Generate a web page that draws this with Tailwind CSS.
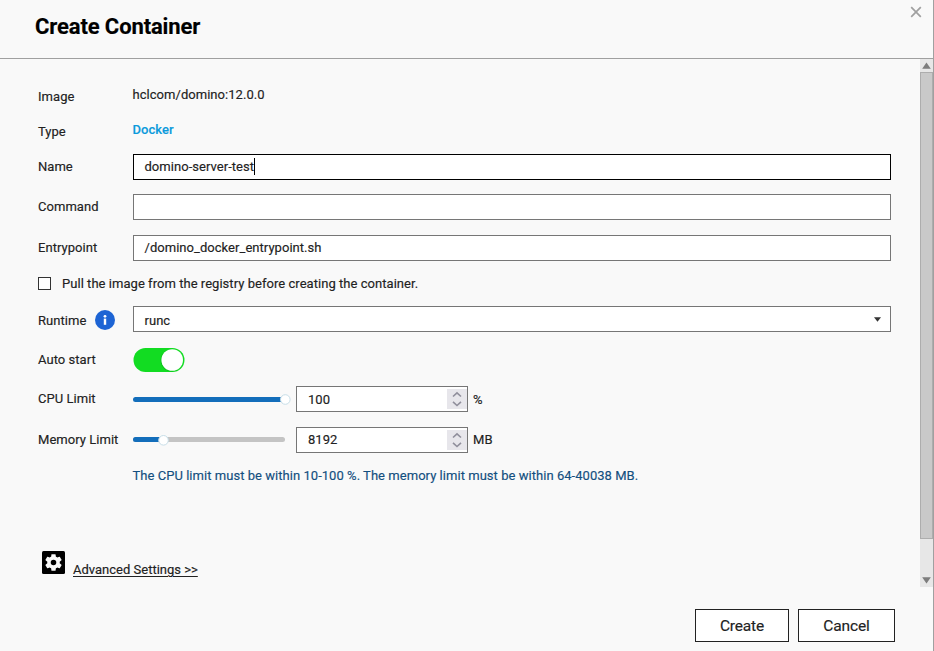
<!DOCTYPE html>
<html lang="en">
<head>
<meta charset="utf-8">
<title>Create Container</title>
<script src="https://cdn.jsdelivr.net/npm/@tailwindcss/browser@4"></script>
</head>
<body class="w-[934px] h-[651px] overflow-hidden bg-[#f9f9f9] text-[#222] font-[Roboto,sans-serif] text-[13px] leading-[18px] tracking-[0.04px] [-webkit-text-stroke:0.15px]">
<div class="flex flex-col w-full h-full border-r border-[#a0a0a0]">
  <header class="flex justify-between h-[59px] shrink-0 border-b border-[#a0a0a0] pl-[35px] pr-[11px]">
    <h1 class="pt-[13px] text-[22px] leading-[28px] font-bold text-black tracking-[-0.12px]">Create Container</h1>
    <svg class="mt-[6px] w-[12px] h-[12px]" viewBox="0 0 12 12" fill="none" stroke="#a0a0a0" stroke-width="1.7"><path d="M1.2 1.2 10.8 10.8M10.8 1.2 1.2 10.8"/></svg>
  </header>
  <div class="flex h-[528px] shrink-0">
    <main class="flex flex-col flex-1 pl-[38px] pr-[29px] pt-[25px]">
      <div class="flex h-[24px]"><span class="w-[94.5px] pt-[4px]">Image</span><span class="pt-[2px]">hclcom/domino:12.0.0</span></div>
      <div class="flex h-[24px] mt-[11px]"><span class="w-[94.5px] pt-[4px]">Type</span><span class="pt-[2px] font-medium text-[#0c9bdc]">Docker</span></div>
      <div class="flex items-center h-[26px] mt-[11px]"><span class="w-[95px]">Name</span><div class="flex flex-1 items-center h-[26px] border border-black bg-white pl-[10.5px] pb-px">domino-server-test<i class="w-px h-[17px] bg-black"></i></div></div>
      <div class="flex items-center h-[26px] mt-[14px]"><span class="w-[95px]">Command</span><div class="flex-1 h-[26px] border border-[#767676] bg-white"></div></div>
      <div class="flex items-center h-[26px] mt-[15px]"><span class="w-[95px]">Entrypoint</span><div class="flex flex-1 items-center h-[26px] border border-[#767676] bg-white pl-[10.5px]">/domino_docker_entrypoint.sh</div></div>
      <div class="flex items-center h-[26px] mt-[10px]"><i class="w-[13px] h-[13px] mb-px border border-[#333] bg-white mr-[11px]"></i><span>Pull the image from the registry before creating the container.</span></div>
      <div class="flex items-center h-[26px] mt-[9px]">
        <div class="flex items-center w-[95px] gap-[9px]"><span class="w-[48px] pt-[4px]">Runtime</span><svg class="w-[20px] h-[20px] mt-[2px]" viewBox="0 0 20 20"><circle cx="10" cy="10" r="10" fill="#1d64d4"/><circle cx="10" cy="6.3" r="1.4" fill="#fff"/><path d="M8.8 8.6h2.4v6.2H8.8z" fill="#fff"/></svg></div>
        <div class="flex flex-1 items-center justify-between h-[26px] border border-[#767676] bg-white pl-[10.5px] pr-[9px]"><span class="pt-[3px]">runc</span><svg class="w-[7px] h-[5px]" viewBox="0 0 7 5"><path d="M0 .3h7L3.5 4.8z" fill="#333"/></svg></div>
      </div>
      <div class="flex items-center h-[26px] mt-[15px]"><span class="w-[95px]">Auto start</span><svg class="w-[52px] h-[24px]" viewBox="0 0 52 24"><rect x=".5" width="51" height="24" rx="12" fill="#12dc22"/><circle cx="38.6" cy="12.4" r="11" fill="#08a818" opacity=".5"/><circle cx="39.2" cy="12" r="10.8" fill="#fff"/></svg></div>
      <div class="flex items-center h-[26px] mt-[13px]">
        <span class="w-[95px]">CPU Limit</span>
        <svg class="w-[163px] h-[12px] shrink-0" viewBox="0 0 163 12"><rect y="4" width="152" height="5" rx="2.5" fill="#136ebb"/><circle cx="152.3" cy="6.5" r="4.8" fill="#fff" stroke="#c7dee8"/></svg>
        <div class="flex items-center justify-between w-[172px] h-[26px] border border-[#767676] bg-white pl-[11px]"><span class="pt-[2px]">100</span><svg class="w-[20px] h-[20px]" viewBox="0 0 20 20"><path fill="#e7e6eb" d="M0 0h20v20H0z"/><path d="m6 7.5 4-3.7 4 3.7M6 12.8l4 3.7 4-3.7" fill="none" stroke="#908f9c" stroke-width="1.6"/></svg></div>
        <span class="pl-[5px] pt-[2px]">%</span>
      </div>
      <div class="flex items-center h-[26px] mt-[15px]">
        <span class="w-[95px]">Memory Limit</span>
        <svg class="w-[163px] h-[12px] shrink-0" viewBox="0 0 163 12"><rect y="3" width="152" height="5" rx="2.5" fill="#c4c4c4"/><path d="M30 3H2.5a2.5 2.5 0 0 0 0 5H30z" fill="#136ebb"/><circle cx="30.5" cy="6.3" r="4.8" fill="#fff" stroke="#c7dee8"/></svg>
        <div class="flex items-center justify-between w-[172px] h-[26px] border border-[#767676] bg-white pl-[11px]"><span>8192</span><svg class="w-[20px] h-[20px]" viewBox="0 0 20 20"><path fill="#e7e6eb" d="M0 0h20v20H0z"/><path d="m6 7.5 4-3.7 4 3.7M6 12.8l4 3.7 4-3.7" fill="none" stroke="#908f9c" stroke-width="1.6"/></svg></div>
        <span class="pl-[5px]">MB</span>
      </div>
      <p class="mt-[14px] pl-[94.5px] text-[#134f80]">The CPU limit must be within 10-100 %. The memory limit must be within 64-40038 MB.</p>
      <div class="flex mt-[66px] pl-[4px] gap-[8px]">
        <svg class="w-[23px] h-[23px]" viewBox="0 0 23 23"><rect width="23" height="23" rx="1.5" fill="#000"/><g transform="translate(1.1 1.1) scale(.867)"><path fill="#f9f9f9" d="M19.14 12.94c.04-.3.06-.61.06-.94 0-.32-.02-.64-.07-.94l2.03-1.58a.49.49 0 0 0 .12-.61l-1.92-3.32a.488.488 0 0 0-.59-.22l-2.39.96c-.5-.38-1.03-.7-1.62-.94l-.36-2.54a.484.484 0 0 0-.48-.41h-3.84c-.24 0-.43.17-.47.41l-.36 2.54c-.59.24-1.13.57-1.62.94l-2.39-.96c-.22-.08-.47 0-.59.22L2.74 8.87c-.12.21-.08.47.12.61l2.03 1.58c-.05.3-.09.63-.09.94s.02.64.07.94l-2.03 1.58a.49.49 0 0 0-.12.61l1.92 3.32c.12.22.37.29.59.22l2.39-.96c.5.38 1.03.7 1.62.94l.36 2.54c.05.24.24.41.48.41h3.84c.24 0 .44-.17.47-.41l.36-2.54c.59-.24 1.13-.56 1.62-.94l2.39.96c.22.08.47 0 .59-.22l1.92-3.32c.12-.22.07-.47-.12-.61l-2.01-1.58zM12 15.2a3.2 3.2 0 1 1 0-6.4 3.2 3.2 0 0 1 0 6.4z"/></g></svg>
        <a class="pt-[10px] tracking-[0px] underline underline-offset-2">Advanced Settings &gt;&gt;</a>
      </div>
    </main>
    <div class="flex flex-col w-[13px] bg-[#e7e7e7]">
      <svg class="w-[13px] h-[13px] shrink-0" viewBox="0 0 13 13"><path d="M2.2 9.7h8.6L6.5 3.5z" fill="#7d7d7d"/></svg>
      <div class="h-[467px] border border-[#adadad] bg-[#c9c9c9]"></div>
      <svg class="mt-auto w-[13px] h-[13px] shrink-0" viewBox="0 0 13 13"><path d="M2.2 3.3h8.6L6.5 9.5z" fill="#7d7d7d"/></svg>
    </div>
  </div>
  <footer class="flex justify-end gap-[9px] pt-[22px] pr-[38px] text-[15.5px] leading-[20px] text-[#222]">
    <button class="w-[94px] h-[33px] border border-[#222] bg-white tracking-[-0.15px]">Create</button>
    <button class="w-[97px] h-[33px] border border-[#222] bg-white tracking-[-0.15px]">Cancel</button>
  </footer>
</div>
</body>
</html>
